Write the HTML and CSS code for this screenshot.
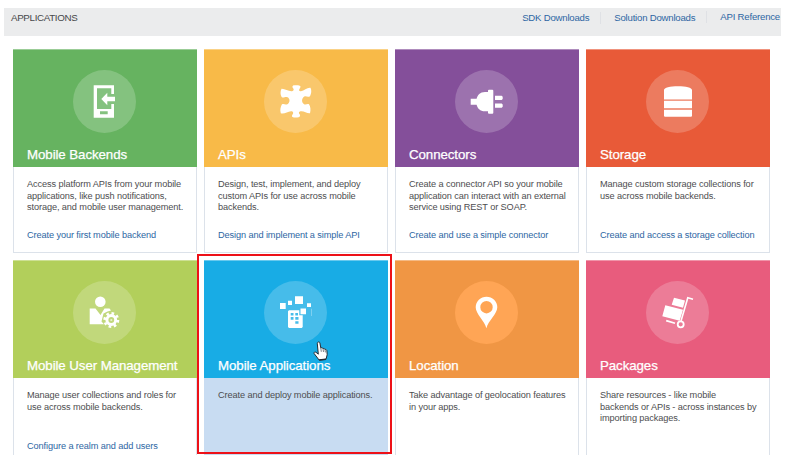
FILE: index.html
```html
<!DOCTYPE html>
<html lang="en">
<head>
<meta charset="utf-8">
<title>Applications</title>
<link rel="stylesheet" href="styles.css">
</head>
<body>
<header class="topbar">
  <h1 class="topbar-title">APPLICATIONS</h1>
  <nav class="topbar-links">
    <a>SDK Downloads</a>
    <a>Solution Downloads</a>
    <a class="reference">API Reference</a>
  </nav>
</header>
<main class="tiles">
  <section class="tile">
    <div class="tile-head green">
      <svg class="icon" viewBox="0 0 63 63"><circle class="disc" cx="31.5" cy="31.5" r="31.5"/><path fill-rule="evenodd" d="M20.7 15.3H41V24H38.3V18.3H24V39H38.3V34H41V47.7H20.7ZM27 41.3V44.3H34.7V41.3Z"/><path d="M28.3 29 34.3 22.7V26.7H42V31.2H34.3V35.3Z"/></svg>
      <h2>Mobile Backends</h2>
    </div>
    <div class="tile-body"><p>Access platform APIs from your mobile<br>applications, like push notifications,<br>storage, and mobile user management.</p><a>Create your first mobile backend</a></div>
  </section>
  <section class="tile">
    <div class="tile-head yellow">
      <svg class="icon" viewBox="0 0 63 63"><circle class="disc" cx="31.5" cy="31.5" r="31.5"/><path d="M17.5 18.8C21 18.6 24.5 21.6 28 21.2C30.3 20.6 29.9 19 28.7 17.8C27.6 15.3 30 15.2 32 15.2C35 15.2 37.4 15.6 36.2 17.8C34.3 20 35 21.5 37 21.2C40.3 20.7 43 17.4 46.5 17.8C47.8 20.5 47.4 23.5 46 26.2C43.4 27.6 42 25.4 40 26.7C37.4 28.6 37.6 32.2 39.8 34C41.8 35.4 43.2 33.2 45 34.3C46.6 37 46.9 40 46 43.2C43 43.6 40 40.7 36.5 41.2C34.2 41.8 34.8 43.6 36 44.8C36.6 47.4 34 47.6 31.7 47.6C29 47.6 27.2 47.2 28.3 44.8C29.9 43.2 29.4 41.2 27 41.2C23.5 41.4 20.5 44.2 16.8 43.2C15.8 39.5 16.6 37 17.8 34.5C20 33.2 21 35.4 23.4 34.2C26.4 32.3 26 28.5 23.6 27.2C21 26.2 19.6 28.6 17.6 27C16.2 24.6 16.2 21.4 17.5 18.8Z"/></svg>
      <h2>APIs</h2>
    </div>
    <div class="tile-body"><p>Design, test, implement, and deploy<br>custom APIs for use across mobile<br>backends.</p><a>Design and implement a simple API</a></div>
  </section>
  <section class="tile">
    <div class="tile-head purple">
      <svg class="icon" viewBox="0 0 63 63"><circle class="disc" cx="31.5" cy="31.5" r="31.5"/><path d="M15.7 28.7H21.6C22.5 25.2 25 22 30 22H33V20.7Q33 19.7 34 19.7H37.3Q38.3 19.7 38.3 20.7V42.7Q38.3 43.7 37.3 43.7H34Q33 43.7 33 42.7V41.3H30C25 41.3 22.5 38.2 21.6 34.7H15.7ZM40 25.7H46.7L47.7 26.7V29L46.7 30H40ZM40 33.5H46.7L47.7 34.5V36.8L46.7 37.8H40Z"/></svg>
      <h2>Connectors</h2>
    </div>
    <div class="tile-body"><p>Create a connector API so your mobile<br>application can interact with an external<br>service using REST or SOAP.</p><a>Create and use a simple connector</a></div>
  </section>
  <section class="tile">
    <div class="tile-head red">
      <svg class="icon" viewBox="0 0 63 63"><circle class="disc" cx="31.5" cy="31.5" r="31.5"/><path d="M18 29.5V20C18 17.5 24 16.2 32 16.2S46 17.5 46 20V29.5ZM18 30.8H46V38.2H18ZM18 39.7H46V46L45.3 46.8H18.7L18 46Z"/></svg>
      <h2>Storage</h2>
    </div>
    <div class="tile-body"><p>Manage custom storage collections for<br>use across mobile backends.</p><a>Create and access a storage collection</a></div>
  </section>
  <section class="tile">
    <div class="tile-head lime">
      <svg class="icon" viewBox="0 0 63 63"><circle class="disc" cx="31.5" cy="31.5" r="31.5"/><circle cx="27.3" cy="20.7" r="5.3"/><path d="M16.7 27.6H22.5L27.5 34 31.5 27.6H36.5L38 29.5 34.5 30.5 30.5 32.5 29.6 36 28.5 40.5 31 43.3H16.7Z"/><g fill="none" stroke="#fff"><circle cx="38.3" cy="39" r="4.4" stroke-width="3"/><circle cx="38.3" cy="39" r="6.7" stroke-width="2.6" stroke-dasharray="2.63 2.63"/></g><circle cx="38.3" cy="39" r="1.1" opacity=".65"/></svg>
      <h2>Mobile User Management</h2>
    </div>
    <div class="tile-body"><p>Manage user collections and roles for<br>use across mobile backends.</p><a>Configure a realm and add users</a></div>
  </section>
  <section class="tile selected">
    <div class="tile-head blue">
      <svg class="icon" viewBox="0 0 63 63"><circle class="disc" cx="31.5" cy="31.5" r="31.5"/><path d="M16 22H21.7V28H16ZM24 19.8H28V24H24ZM31 15.2H39V23H31ZM43 22.2H47V26H43ZM36.5 27.5H42V33.2H36.5Z"/><path fill-rule="evenodd" d="M25 29.3H35.3V34.3H38.7V46L37.7 47H25L24 46V30.3ZM26.7 32V34.5H29.5V32ZM31.3 32V34.5H34V32ZM26.7 36V38.7H29.5V36ZM31.3 36V38.7H34.5V36ZM31.3 40.2V42.7H34.5V40.2Z"/><path d="M47 27.7H47.6V35H47Z" opacity=".5"/></svg>
      <h2>Mobile Applications</h2>
      <svg class="cursor" viewBox="0 0 15 20"><path d="M5 1.2C5.8.7 6.7 1 6.9 2L7.8 6.9C8.8 6.3 9.6 6.8 10 7.6C10.9 7.2 11.6 7.6 12 8.4C13 8.2 13.7 8.7 13.9 9.8L14.2 13.7 13 18.3 6.1 19 1.1 12.5C.6 11.2 2 10.7 3 11.3L5.3 13.2 4.3 2.6C4.2 2 4.4 1.5 5 1.2Z" fill="#fff" stroke="#262b33"/><path d="M7.8 6.9 8.3 10.8M10 7.6 10.5 11M12 8.4 12.4 11.4" fill="none" stroke="#262b33" stroke-width=".6"/><path d="M6.2 19 13 18.3" stroke="#262b33" stroke-width="1.4"/></svg>
    </div>
    <div class="tile-body"><p>Create and deploy mobile applications.</p></div>
    <div class="highlight"></div>
  </section>
  <section class="tile">
    <div class="tile-head orange">
      <svg class="icon" viewBox="0 0 63 63"><circle class="disc" cx="31.5" cy="31.5" r="31.5"/><path fill-rule="evenodd" d="M31.4 47.3C29.7 40 20.7 33 20.7 26.3A10.8 10.6 0 0 1 42.3 26.3C42.3 33 33 40 31.4 47.3ZM31.5 20A6.2 6.2 0 1 0 31.5 32.4 6.2 6.2 0 1 0 31.5 20Z"/></svg>
      <h2>Location</h2>
    </div>
    <div class="tile-body"><p>Take advantage of geolocation features<br>in your apps.</p></div>
  </section>
  <section class="tile">
    <div class="tile-head pink">
      <svg class="icon" viewBox="0 0 63 63"><circle class="disc" cx="31.5" cy="31.5" r="31.5"/><path d="M28 16.7 39 19.4 37 26.8 25.7 23.7ZM19.3 24.3 37 28.8 33.7 39.7 16.3 35.2Z"/><g fill="none" stroke="#fff"><path d="M47 18.2 41.8 16.8 35 40" stroke-width="1.6"/><path d="M20.2 39.6 29 42.3" stroke-width="1.7"/><circle cx="34.7" cy="43.3" r="3" stroke-width="1.8"/></g></svg>
      <h2>Packages</h2>
    </div>
    <div class="tile-body"><p>Share resources - like mobile<br>backends or APIs - across instances by<br>importing packages.</p></div>
  </section>
</main>
</body>
</html>
```
FILE: styles.css
```css
* { box-sizing: border-box; }
body {
  margin: 0;
  padding: 8px 7px 0 4px;
  height: 460px;
  overflow: hidden;
  background: #fff;
  font-family: "Liberation Sans", Arial, sans-serif;
  color: #4d4d4f;
}
h1, h2, p { margin: 0; font-weight: 400; }
.topbar {
  display: flex;
  justify-content: space-between;
  height: 28px;
  padding: 4px 1px 0 7px;
  background: #ebeced;
  line-height: 12px;
}
.topbar-title { font-size: 9.8px; letter-spacing: -.35px; color: #48484a; }
.topbar-links { display: flex; font-size: 9.6px; letter-spacing: -.21px; color: #2d66a3; }
.topbar-links a + a { margin-left: 11px; padding-left: 13px; }
.topbar-links a { height: 12px; }
.topbar-links a + a { border-left: 1px solid #dfe1e5; }
.topbar-links .reference { margin-top: -1px; }
.tiles {
  display: grid;
  grid-template-columns: repeat(4, 184px);
  grid-template-rows: 204px 195px;
  gap: 7px;
  margin: 13px 0 0 9px;
}
.tile {
  position: relative;
  border: 1px solid #dce2ea;
  border-top: 0;
}
.tile:nth-child(n+5) { border-bottom: 0; }
.tile-head {
  position: relative;
  height: 118px;
  margin: 0 -1px;
  padding: 20px 0 0 14px;
  border-top: 1px solid rgba(255, 255, 255, .35);
  color: #fff;
}
.tile-head h2 { margin-top: 14px; font-size: 13.3px; letter-spacing: -.08px; line-height: 15px; -webkit-text-stroke: .25px #fff; white-space: nowrap; }
.icon { display: block; width: 63px; height: 63px; margin-left: 46px; fill: #fff; }
.disc { fill: rgba(255, 255, 255, .2); }
.green { background: #66b360; }
.yellow { background: #f8ba48; }
.purple { background: #844f9a; }
.red { background: #e85a38; }
.lime { background: #b2cf5b; }
.blue { background: #18ace5; }
.orange { background: #f09644; }
.orange .disc { fill: #ffa555; }
.pink { background: #e85c7d; }
.tile-body {
  display: flex;
  flex-direction: column;
  height: 77px;
  padding: 12px 0 0 13px;
  font-size: 9.2px;
  letter-spacing: -.1px;
  line-height: 11.67px;
  white-space: nowrap;
}
.tile-body p { height: 50.7px; }
.tile-body a { color: #2d66a3; }
.selected { border: 0; }
.selected .tile-head { margin: 0; }
.selected .tile-body { padding-left: 14px; background: #c8dcf2; }
.cursor { position: absolute; left: 109px; top: 80px; width: 15px; height: 20px; }
.highlight {
  position: absolute;
  left: -7px;
  top: -6px;
  width: 195px;
  height: 200px;
  border: 2px solid #ed1118;
}
```
